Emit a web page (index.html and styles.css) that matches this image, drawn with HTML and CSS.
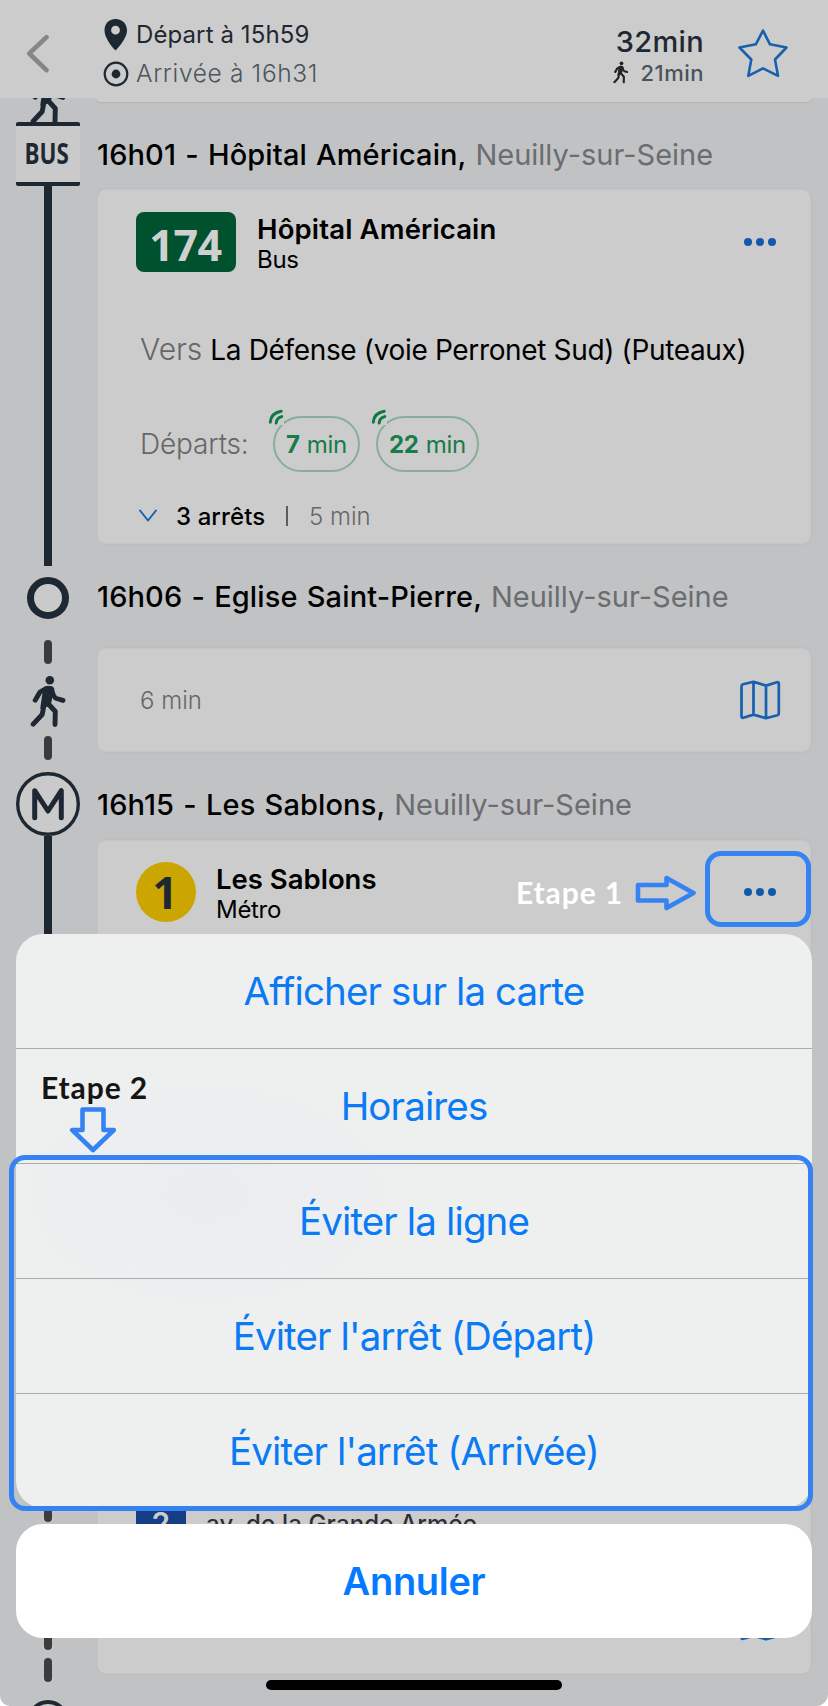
FILE: index.html
```html
<!DOCTYPE html>
<html lang="fr">
<head>
<meta charset="utf-8">
<title>Itinéraire</title>
<link rel="stylesheet" href="styles.css">
</head>
<body>
<svg class="defs" width="0" height="0">
  <symbol id="walker" viewBox="0 0 36 52">
    <circle cx="19.8" cy="5.2" r="4.3" fill="currentColor"/>
    <path d="M14.2 13.5 17.5 11.8 21.5 12.2 23.3 14 19.8 29.5 11.3 33 Z" fill="currentColor" stroke="currentColor" stroke-width="2" stroke-linejoin="round"/>
    <path d="M16 13.5 10 17 5.2 25.2M21.5 14 Q23.5 22.5 26.5 23.5L33 25.4M13.8 31 12.2 39.5 3.2 49.2M18 28.5 25.3 36.5 25 49.5" fill="none" stroke="currentColor" stroke-width="4.9" stroke-linecap="round" stroke-linejoin="round"/>
  </symbol>
  <symbol id="map" viewBox="0 0 42 40">
    <path d="M2.5 6.2Q2.5 4.8 4 4.3L14.5 1.8 27 5.6 38 2.2Q39.8 1.8 39.8 3.5V33.5Q39.8 34.8 38.3 35.3L27 38.2 14.5 34.6 4.3 37.8Q2.5 38.2 2.5 36.5ZM14.5 2V34.6M27 5.6V38" fill="none" stroke="currentColor" stroke-width="2.7" stroke-linejoin="round"/>
  </symbol>
  <symbol id="waves" viewBox="0 0 16 16">
    <path d="M2.3 13.2Q3 4 13.2 2.3M8.2 14Q8.5 8.8 13.7 7.6" fill="none" stroke="currentColor" stroke-width="3" stroke-linecap="round"/>
  </symbol>
  <symbol id="dots" viewBox="0 0 32 8">
    <circle cx="4" cy="4" r="4" fill="currentColor"/><circle cx="16" cy="4" r="4" fill="currentColor"/><circle cx="28" cy="4" r="4" fill="currentColor"/>
  </symbol>
</svg>

<div class="screen">
  <header class="topbar">
    <svg class="back" width="24" height="40" viewBox="0 0 24 40"><path d="M20.5 3.2 3.3 19.5 20.5 36.2" fill="none" stroke="#868686" stroke-width="4.6" stroke-linecap="round" stroke-linejoin="round"/></svg>
    <div class="times">
      <div class="time-row">
        <svg width="26" height="34" viewBox="0 0 26 34"><path fill-rule="evenodd" d="M12.5 1C5.500 1 1.500 6 1.500 12.500 1.500 19 7.500 27.500 12.500 32.500 17.500 27.500 24 19 24 12.500 24 6 19.500 1 12.500 1ZM12.500 7.800A4.400 4.400 0 1 1 12.500 16.600 4.400 4.400 0 1 1 12.500 7.800Z" fill="#1e2832"/></svg>
        <span class="depart">Départ à 15h59</span>
      </div>
      <div class="time-row">
        <svg width="26" height="28" viewBox="0 0 26 28"><circle cx="13" cy="14" r="11.300" fill="none" stroke="#1e2832" stroke-width="2.200"/><circle cx="13" cy="14" r="4.400" fill="#1e2832"/></svg>
        <span class="arrive">Arrivée à 16h31</span>
      </div>
    </div>
    <div class="durations">
      <div class="total">32min</div>
      <div class="walk"><svg width="15.500" height="22.500"><use href="#walker"/></svg><span>21min</span></div>
    </div>
    <svg class="star" width="52" height="52" viewBox="0 0 52 52"><path d="M26 3.500 33 17.300 49.500 20.500 38 32.500 41 48.800 26 41.300 11.300 48.800 14.300 32.500 2.500 20.500 18.800 17.300Z" fill="none" stroke="#1760b0" stroke-width="2.600" stroke-linejoin="round"/></svg>
  </header>

  <main>
    <section class="leg leg-bus">
      <div class="rail">
        <div class="walker-cut"><svg width="36" height="52"><use href="#walker"/></svg></div>
        <div class="bus-sign"><span>BUS</span></div>
        <div class="line"></div>
      </div>
      <div class="body">
        <div class="stub"></div>
        <h2 class="stop">16h01 - Hôpital Américain, <span>Neuilly-sur-Seine</span></h2>
        <div class="card card-bus">
          <div class="card-head">
            <div class="badge-bus">174</div>
            <div class="names"><b>Hôpital Américain</b><i class="mode-bus">Bus</i></div>
            <svg class="more" width="32" height="8"><use href="#dots"/></svg>
          </div>
          <div class="towards"><span class="vers">Vers</span><span class="dest">La Défense (voie Perronet Sud) (Puteaux)</span></div>
          <div class="departures">
            <span class="label">Départs:</span>
            <span class="pill"><svg class="live" width="16" height="16"><use href="#waves"/></svg><b>7</b>min</span>
            <span class="pill pill-wide"><svg class="live" width="16" height="16"><use href="#waves"/></svg><b>22</b>min</span>
          </div>
          <div class="stops">
            <svg width="20" height="14" viewBox="0 0 20 14"><path d="M2 1.500 10 11.500 18 1.500" fill="none" stroke="#1760b0" stroke-width="2" stroke-linecap="round" stroke-linejoin="round"/></svg>
            <span class="count">3 arrêts</span><span class="sep"></span><span class="mins">5 min</span>
          </div>
        </div>
      </div>
    </section>

    <section class="leg leg-walk">
      <div class="rail">
        <div class="node"></div>
        <div class="dash"></div>
        <svg class="walker" width="36" height="52"><use href="#walker"/></svg>
        <div class="dash"></div>
      </div>
      <div class="body">
        <h2 class="stop stop-church">16h06 - Eglise Saint-Pierre, <span>Neuilly-sur-Seine</span></h2>
        <div class="card card-walk"><span class="mins">6 min</span><svg width="42" height="40"><use href="#map"/></svg></div>
      </div>
    </section>

    <section class="leg leg-metro">
      <div class="rail">
        <svg width="64" height="64" viewBox="0 0 64 64"><circle cx="32" cy="32" r="30.300" fill="#cacaca" stroke="#1e2832" stroke-width="3.400"/><path d="M18.700 45.800V18.700L32 39 45.300 18.700V45.800" fill="none" stroke="#1e2832" stroke-width="5" stroke-linecap="round" stroke-linejoin="round"/></svg>
        <div class="line"></div>
      </div>
      <div class="body">
        <h2 class="stop stop-metro">16h15 - Les Sablons, <span>Neuilly-sur-Seine</span></h2>
        <div class="card card-metro">
          <div class="card-head">
            <div class="badge-metro">1</div>
            <div class="names"><b class="sablons">Les Sablons</b><i>Métro</i></div>
            <svg class="more" width="32" height="8"><use href="#dots"/></svg>
          </div>
        </div>
      </div>
    </section>

    <section class="leg leg-last">
      <div class="rail">
        <div class="dash"></div>
        <div class="dash dash-far"></div>
        <div class="dash dash-near"></div>
        <div class="node node-end"></div>
      </div>
      <div class="body">
        <div class="card card-last">
          <div class="exit"><span class="exit-no">2</span><span>av. de la Grande Armée</span></div>
          <svg width="42" height="40"><use href="#map"/></svg>
        </div>
      </div>
    </section>
  </main>

  <div class="sheet">
    <div class="actions">
      <button class="a1">Afficher sur la carte</button>
      <button class="a2">Horaires</button>
      <button class="a3">Éviter la ligne</button>
      <button class="a4">Éviter l'arrêt (Départ)</button>
      <button class="a5">Éviter l'arrêt (Arrivée)</button>
    </div>
    <button class="cancel">Annuler</button>
  </div>
  <div class="home-bar"></div>

  <div class="note note-1"><span>Etape 1</span><svg width="62" height="36" viewBox="0 0 62 36"><path d="M3 10H31.500V3L58.500 18 31.500 33V25.500H3Z" fill="none" stroke="#3582f2" stroke-width="4.600" stroke-linejoin="round"/></svg></div>
  <div class="frame frame-1"></div>
  <div class="note note-2"><span>Etape 2</span><svg width="48" height="46" viewBox="0 0 48 46"><path d="M13.500 2.500H34.500V23H44.800L24 43 3.200 23H13.500Z" fill="none" stroke="#3582f2" stroke-width="4.600" stroke-linejoin="round"/></svg></div>
  <div class="frame frame-2"></div>
</div>
</body>
</html>
```
FILE: styles.css
```css
* { box-sizing: border-box; }
body { margin: 0; background: #fff; font-family: Inter, "Liberation Sans", sans-serif; }
svg { display: block; flex: none; }
.defs { position: absolute; }

.screen { position: relative; width: 828px; height: 1706px; overflow: hidden; background: #c0c2c4; border-radius: 0 0 12px 10px; }

.topbar { display: flex; height: 98px; background: #ccc; color: #1e2832; }
.back { margin: 34px 0 0 26px; }
.times { margin: 15px 0 0 53px; }
.time-row { display: flex; align-items: center; gap: 7px; height: 39px; white-space: nowrap; }
.time-row span { font-size: 24px; line-height: 39px; }
.depart { letter-spacing: .1px; }
.time-row .arrive { color: #4a565e; font-weight: 300; font-size: 24.500px; letter-spacing: .65px; }
.durations { margin: 24px 0 0 auto; display: flex; flex-direction: column; align-items: flex-end; }
.total { font-size: 29px; font-weight: 450; line-height: 36px; letter-spacing: .35px; }
.walk { display: flex; align-items: center; gap: 12px; height: 25px; font-size: 22px; font-weight: 450; letter-spacing: .5px; color: #48545c; }
.walk svg { color: #222; }
.star { margin: 27px 39px 0 33px; }

.leg { display: grid; grid-template-columns: 97px 1fr; }
.rail { display: flex; flex-direction: column; align-items: center; width: 96px; color: #1e2832; }
.body { padding-right: 17px; }
.line { width: 8px; flex: 1; background: #1e2832; }
.dash { width: 8px; height: 24px; border-radius: 4px; background: #3b3c3e; flex: none; }

.stop { margin: 0; height: 40px; font-size: 29px; font-weight: 500; line-height: 40px; letter-spacing: .12px; word-spacing: 1.300px; white-space: nowrap; color: #000; }
.stop span { font-weight: 400; color: #6b6d70; letter-spacing: 0; }
.card { background: #ccc; border: 1px solid #c5c6c8; border-radius: 9px; box-shadow: 0 0 3px rgba(0, 0, 0, .06); }

.leg-bus { height: 468px; }
.walker-cut { height: 24px; width: 36px; overflow: hidden; display: flex; align-items: flex-end; }
.walker-cut svg { margin-bottom: -2px; }
.bus-sign { width: 64px; height: 64px; border: solid #1e2832; border-width: 4px 0; border-radius: 2px; background: #cacaca; display: flex; align-items: center; justify-content: center; }
.bus-sign span { font: 700 28px/56px "Open Sans", sans-serif; height: 58px; margin-right: 2px; transform: scaleX(.8); }
.stub { height: 4px; background: #ccc; border-radius: 0 0 9px 9px; box-shadow: 0 1px 2px rgba(0, 0, 0, .08); }
.leg-bus .stop { margin-top: 33px; }
.card-bus { margin-top: 14px; height: 355px; }
.card-head { display: flex; padding: 22px 34px 0 38px; }
.badge-bus { width: 100px; height: 60px; border-radius: 8px; background: #00522f; color: #d0d0d0; font: 700 43px/66px "Open Sans", sans-serif; letter-spacing: -.4px; padding-right: 1px; text-align: center; }
.names { margin-left: 21px; white-space: nowrap; }
.names b, .names i { display: block; font-style: normal; color: #000; }
.names b { font-size: 27.500px; font-weight: 600; line-height: 34px; letter-spacing: .15px; }
.names i { font-size: 24px; line-height: 27px; letter-spacing: -.3px; }
.more { margin: 26px 0 0 auto; color: #1458ad; }
.towards { display: flex; align-items: baseline; gap: 8px; margin: 55px 0 0 42px; height: 42px; line-height: 42px; white-space: nowrap; color: #000; }
.vers { font-size: 30px; font-weight: 350; color: #666; letter-spacing: 0; }
.dest { font-size: 28px; letter-spacing: -.35px; }
.departures { display: flex; align-items: center; margin: 45px 0 0 42px; height: 58px; }
.label { width: 133px; font-size: 28px; font-weight: 350; letter-spacing: -.15px; color: #666; }
.pill { position: relative; display: flex; gap: 7px; width: 87px; height: 56px; padding-left: 11px; border: 2px solid #88ae9b; border-radius: 28px; font-size: 24px; line-height: 54px; letter-spacing: -.25px; color: #167c49; }
.pill-wide { width: 103px; margin-left: 16px; }
.pill b { font-weight: 700; }
.live { position: absolute; left: -7px; top: -9px; background: #ccc; color: #0c7a43; }
.stops { display: flex; align-items: center; margin: 27px 0 0 40px; height: 32px; font-size: 24px; }
.count { margin-left: 18px; width: 90px; font-weight: 500; color: #000; white-space: nowrap; letter-spacing: .1px; }
.sep { width: 2px; height: 20px; margin-left: 20px; background: #5b5b5b; }
.mins { font-size: 24px; font-weight: 350; color: #666; }
.stops .mins { margin-left: 21px; }

.leg-walk { height: 206px; }
.node { width: 42px; height: 42px; border: 7px solid #1e2832; border-radius: 50%; background: #cacaca; margin-top: 11px; flex: none; }
.node + .dash { margin-top: 21px; }
.walker { margin: 11px 0 9px; }
.stop-church { margin-top: 11px; }
.card-walk { margin-top: 31px; height: 104px; display: flex; align-items: center; justify-content: space-between; padding: 0 29px 0 42px; color: #1760b0; }

.leg-metro { height: 428px; }
.stop-metro { margin-top: 13px; }
.card-metro { margin-top: 15px; height: 380px; border-bottom: 0; border-radius: 9px 9px 0 0; }
.card-metro .card-head { padding-top: 21px; }
.badge-metro { width: 60px; height: 60px; border-radius: 50%; background: #cba500; color: #1e2832; font: 700 44px/60px "Open Sans", sans-serif; padding-right: 2px; text-align: center; }
.card-metro .names { margin-left: 20px; }
.names .sablons { letter-spacing: 0; }

.leg-last { height: 506px; }
.leg-last .rail .dash:first-child { margin-top: 298px; }
.dash-far { margin-top: 104px; }
.dash-near { margin-top: 8px; }
.node-end { border-width: 4px; margin-top: 18px; }
.card-last { height: 474px; border-top: 0; border-radius: 0 0 9px 9px; display: flex; flex-direction: column; align-items: flex-end; justify-content: flex-end; padding: 0 29px 32px 38px; color: #1760b0; }
.exit { align-self: stretch; display: flex; align-items: center; gap: 20px; height: 50px; margin-bottom: 53px; font-size: 24px; font-weight: 500; letter-spacing: .16px; color: #2b2f36; white-space: nowrap; }
.exit-no { width: 50px; height: 50px; background: #163e86; color: #ccc; font: 600 30px/50px Inter, sans-serif; text-align: center; }

.sheet { position: absolute; left: 16px; top: 934px; width: 796px; }
.sheet button { display: block; width: 100%; padding: 0; border: 0; background: none; color: #0a7af5; font-family: inherit; font-size: 38.500px; line-height: 114px; letter-spacing: -.88px; }
.actions { border-radius: 27px; overflow: hidden; background: radial-gradient(ellipse 210px 130px at 190px 260px, #eaedf0, rgba(237, 239, 239, 0)) #eeefef; }
.actions button { height: 115px; border-bottom: 1px solid #aaacae; }
.sheet .actions .a5 { height: 114px; border-bottom: 0; }
.sheet .cancel { margin-top: 16px; height: 114px; border-radius: 27px; background: #fff; font-weight: 600; font-size: 38px; letter-spacing: -.3px; color: #067aff; }
.home-bar { position: absolute; left: 266px; top: 1680px; width: 296px; height: 10px; border-radius: 5px; background: #000; }

.note { position: absolute; font: 700 30px/34px Lato, sans-serif; white-space: nowrap; }
.note-1 { left: 516px; top: 875px; display: flex; gap: 14px; color: #fff; }
.note-1 span { width: 105px; letter-spacing: .9px; }
.note-2 { left: 41px; top: 1070px; color: #151515; }
.note-2 span { letter-spacing: .9px; }
.note-2 svg { margin: 3px 0 0 28px; }
.frame { position: absolute; border: 5px solid #3582f2; }
.frame-1 { left: 705px; top: 851px; width: 106px; height: 76px; border-radius: 16px; }
.frame-2 { left: 9px; top: 1155px; width: 804px; height: 356px; border-radius: 16px; }
```
